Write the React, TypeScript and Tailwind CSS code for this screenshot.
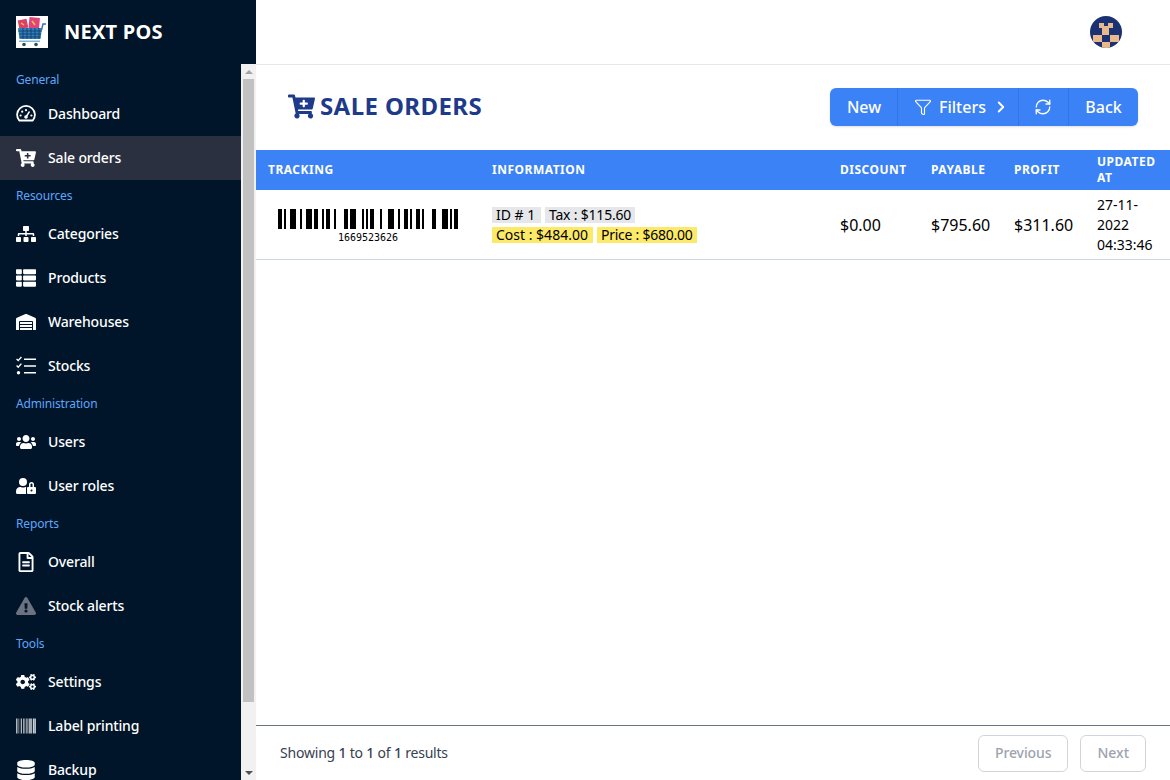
import type { ReactNode } from "react";
import { ChevronRight, Filter, RefreshCw } from "lucide-react";
import {
  FaBarcode,
  FaCartPlus,
  FaCogs,
  FaDatabase,
  FaExclamationTriangle,
  FaRegFileAlt,
  FaSitemap,
  FaThList,
  FaUserLock,
  FaUsers,
  FaWarehouse,
} from "react-icons/fa";

interface NavItem {
  label: string;
  icon: ReactNode;
  active?: boolean;
}

interface NavGroup {
  title: string;
  items: NavItem[];
}

const GaugeIcon = () => (
  <svg width="20" height="20" viewBox="0 0 20 20" fill="#fff">
    <path d="M3.200 16.500a8.900 8.900 0 1 1 13.600 0z" fill="none" stroke="#fff" strokeWidth="1.800" strokeLinejoin="round" />
    <circle cx="4.600" cy="11.500" r="1.100" />
    <circle cx="6.200" cy="7.700" r="1.100" />
    <circle cx="10" cy="6.200" r="1.100" />
    <circle cx="15.400" cy="11.500" r="1.100" />
    <circle cx="10" cy="13" r="1.800" />
    <path d="M10 13l3.500-5.500" stroke="#fff" strokeWidth="1.400" />
  </svg>
);

const ChecklistIcon = () => (
  <svg width="20" height="20" viewBox="0 0 20 20" fill="none" stroke="#fff">
    <path d="M8 3.300h12M8 10h12M8 16.700h12" strokeWidth="1.600" />
    <path d="M.6 3l1.600 1.600L5.400 1M.6 9.600l1.600 1.600 3.200-3.600" strokeWidth="1.400" />
    <circle cx="2.500" cy="16.700" r="1.700" fill="#fff" stroke="none" />
  </svg>
);

const groups: NavGroup[] = [
  {
    title: "General",
    items: [
      { label: "Dashboard", icon: <GaugeIcon /> },
      { label: "Sale orders", icon: <FaCartPlus size={20} />, active: true },
    ],
  },
  {
    title: "Resources",
    items: [
      { label: "Categories", icon: <FaSitemap size={20} /> },
      { label: "Products", icon: <FaThList size={20} /> },
      { label: "Warehouses", icon: <FaWarehouse size={20} /> },
      { label: "Stocks", icon: <ChecklistIcon /> },
    ],
  },
  {
    title: "Administration",
    items: [
      { label: "Users", icon: <FaUsers size={20} /> },
      { label: "User roles", icon: <FaUserLock size={20} /> },
    ],
  },
  {
    title: "Reports",
    items: [
      { label: "Overall", icon: <FaRegFileAlt size={20} /> },
      {
        label: "Stock alerts",
        icon: <FaExclamationTriangle size={20} className="text-[#6b7280]" />,
      },
    ],
  },
  {
    title: "Tools",
    items: [
      { label: "Settings", icon: <FaCogs size={20} /> },
      { label: "Label printing", icon: <FaBarcode size={20} /> },
      { label: "Backup", icon: <FaDatabase size={20} /> },
    ],
  },
];

// code128 set C for 1669523626
const barcodePatterns = [
  "211232",
  "123122",
  "112214",
  "213311",
  "112313",
  "321221",
  "122114",
  "2331112",
];

const Barcode = () => {
  const bars: { x: number; w: number }[] = [];
  let x = 0;
  barcodePatterns.join("").split("").forEach((c, i) => {
    const w = Number(c) * 2;
    if (i % 2 === 0) bars.push({ x, w });
    x += w;
  });

  return (
    <div className="flex flex-col items-center w-[180px] pt-1">
      <svg width="180" height="20" viewBox="0 0 180 20" className="block">
        {bars.map((b) => (
          <rect key={b.x} x={b.x} y="0" width={b.w} height="20" fill="#000" />
        ))}
      </svg>
      <span className="text-[10px] leading-[14px] mt-[2px] font-['DejaVu_Sans_Mono',monospace] text-black">
        1669523626
      </span>
    </div>
  );
};

const Logo = () => (
  <svg width="32" height="32" viewBox="0 0 32 32" className="block">
    <rect width="32" height="32" fill="#fff" />
    <rect x="2.500" y="3.500" width="9" height="9" fill="#d9416b" transform="rotate(-12 7 8)" />
    <rect x="13" y="1.500" width="10.500" height="11" fill="#e0447a" transform="rotate(5 18 7)" />
    <path d="M5 7l3 2M16 5l3 4" stroke="#f4c542" strokeWidth="1.500" />
    <path d="M2 12h24l-1.500 11H3.500z" fill="#2f7fc0" />
    <path
      d="M2 15h24M3 18h22M3.500 21h21M7 12v11M11 12v11M15 12v11M19 12v11M23 12v11"
      stroke="#123a5e"
      strokeWidth="0.800"
    />
    <path d="M25.500 14l1.500-6h3" stroke="#3a6f9c" strokeWidth="1.400" fill="none" />
    <rect x="3" y="24.500" width="21" height="1.500" fill="#7fb1d6" />
    <circle cx="8" cy="28.500" r="1.800" fill="#2f4f4f" />
    <circle cx="20" cy="28.500" r="1.800" fill="#2f4f4f" />
  </svg>
);

const Avatar = () => (
  <svg width="32" height="32" viewBox="0 0 32 32" className="block rounded-full">
    <rect width="32" height="32" fill="#1a3273" />
    <path
      d="M9 7h5v3h4V7h5v5h-4v7h10v7h-9v-7h-8v7H3v-7h9v-7H9zM12 26h8v6h-8z"
      fill="#e9b88c"
    />
  </svg>
);

const Scrollbar = () => (
  <div className="flex flex-col w-[15px] shrink-0 bg-[#f1f1f1] pl-[2px] pr-[2px]">
    <div className="h-[15px] flex items-center justify-center shrink-0">
      <div className="w-0 h-0 border-x-[4px] border-x-transparent border-b-[4px] border-b-[#a3a3a3]" />
    </div>
    <div className="h-[623px] bg-[#c1c1c1] shrink-0" />
    <div className="flex-1" />
    <div className="h-[15px] flex items-center justify-center shrink-0">
      <div className="w-0 h-0 border-x-[4px] border-x-transparent border-t-[4px] border-t-[#505050]" />
    </div>
  </div>
);

const Badge = ({ children, yellow, className = "" }: { children: ReactNode; yellow?: boolean; className?: string }) => (
  <span className={`inline-block h-4 leading-4 px-1 text-sm text-black whitespace-nowrap ${yellow ? "bg-[#fde968]" : "bg-[#e5e7eb]"} ${className}`}>
    {children}
  </span>
);

export default function App() {
  return (
    <div className="flex h-screen w-full overflow-hidden bg-white font-['Noto_Sans',sans-serif]">
      {/* Sidebar */}
      <aside className="flex flex-col w-64 shrink-0 bg-[#001529] text-white">
        <div className="flex items-center gap-4 h-16 shrink-0 px-4">
          <Logo />
          <span className="text-xl font-bold tracking-[0.25px]">NEXT POS</span>
        </div>
        <div className="flex flex-1 min-h-0">
          <nav className="flex-1 min-w-0 overflow-hidden tracking-[-0.15px]">
            {groups.map((group, i) => (
              <div key={group.title}>
                <div className={`pl-4 flex items-center text-xs text-[#60a5fa] ${i === 0 ? "h-7 pt-1" : "h-8"}`}>
                  {group.title}
                </div>
                {group.items.map((item) => (
                  <div
                    key={item.label}
                    className={`flex items-center h-11 pl-4 text-sm font-medium ${item.active ? "bg-[#2a3040]" : ""}`}
                  >
                    <span className="w-5 mr-3 flex justify-center">{item.icon}</span>
                    <span>{item.label}</span>
                  </div>
                ))}
              </div>
            ))}
          </nav>
          <Scrollbar />
        </div>
      </aside>

      {/* Main */}
      <main className="flex flex-col flex-1 min-w-0">
        <header className="flex items-center justify-end h-[65px] shrink-0 pr-12 border-b border-[#e5e7eb]">
          <Avatar />
        </header>

        <div className="flex items-center justify-between h-[85px] shrink-0 pl-8 pr-8 pb-[1px]">
          <h1 className="flex items-center gap-[5px] text-2xl font-bold text-[#1e3a8a] tracking-[0.4px] pb-[2px]">
            <FaCartPlus size={27} />
            SALE ORDERS
          </h1>
          <div className="flex h-[38px] rounded-md bg-[#3b82f6] text-white font-medium shadow-sm">
            <button className="w-[67px] pl-[1px] text-center">New</button>
            <button className="flex items-center w-[121px] pl-4 border-l border-[#3574e2]">
              <Filter size={18} strokeWidth={1.5} />
              <span className="ml-[7px]">Filters</span>
              <ChevronRight size={18} strokeWidth={2.5} className="ml-[6px]" />
            </button>
            <button className="w-[50px] pl-[15px] border-l border-[#3574e2]">
              <RefreshCw size={18} strokeWidth={1.75} />
            </button>
            <button className="w-[70px] text-center border-l border-[#3574e2]">Back</button>
          </div>
        </div>

        <div className="flex-1 min-h-0">
          <table className="w-full table-fixed border-collapse">
            <thead className="bg-[#3b82f6] text-white text-xs font-bold uppercase tracking-[0.5px] text-left">
              <tr className="h-10">
                <th className="w-[224px] px-3 py-1">Tracking</th>
                <th className="px-3 py-1">Information</th>
                <th className="w-[91px] px-3 py-1">Discount</th>
                <th className="w-[83px] px-3 py-1">Payable</th>
                <th className="w-[83px] px-3 py-1">Profit</th>
                <th className="w-[85px] px-3 py-1 leading-4">Updated at</th>
              </tr>
            </thead>
            <tbody>
              <tr className="border-b border-[#c8d8ea] text-black">
                <td className="px-[22px] pt-[5px] pb-[4px]">
                  <Barcode />
                </td>
                <td className="px-3 pt-[5px] pb-[4px]">
                  <div className="flex gap-1">
                    <Badge className="w-[49px]">ID # 1</Badge>
                    <Badge className="w-[90px] tracking-[-0.2px]">Tax : $115.60</Badge>
                  </div>
                  <div className="flex gap-1 mt-1">
                    <Badge yellow className="w-[101px]">Cost : $484.00</Badge>
                    <Badge yellow className="w-[100px] tracking-[-0.25px]">Price : $680.00</Badge>
                  </div>
                </td>
                <td className="px-3 pt-[5px] pb-[4px]">$0.00</td>
                <td className="px-3 pt-[5px] pb-[4px]">$795.60</td>
                <td className="px-3 pt-[5px] pb-[4px]">$311.60</td>
                <td className="px-3 pt-[5px] pb-[4px] text-sm leading-5">27-11-2022 04:33:46</td>
              </tr>
            </tbody>
          </table>
        </div>

        <footer className="flex items-center justify-between h-[55px] shrink-0 px-6 border-t border-[#6b7280]">
          <div className="text-sm text-[#374151] tracking-[-0.2px]">
            Showing <span className="font-medium">1</span> to <span className="font-medium">1</span> of{" "}
            <span className="font-medium">1</span> results
          </div>
          <div className="flex gap-3">
            <button className="h-[37px] px-4 text-sm font-medium tracking-[-0.1px] text-[#9ca3af] bg-white border border-[#d1d5db] rounded-md">
              Previous
            </button>
            <button className="h-[37px] px-4 text-sm font-medium text-[#9ca3af] bg-white border border-[#d1d5db] rounded-md">
              Next
            </button>
          </div>
        </footer>
      </main>
    </div>
  );
}
